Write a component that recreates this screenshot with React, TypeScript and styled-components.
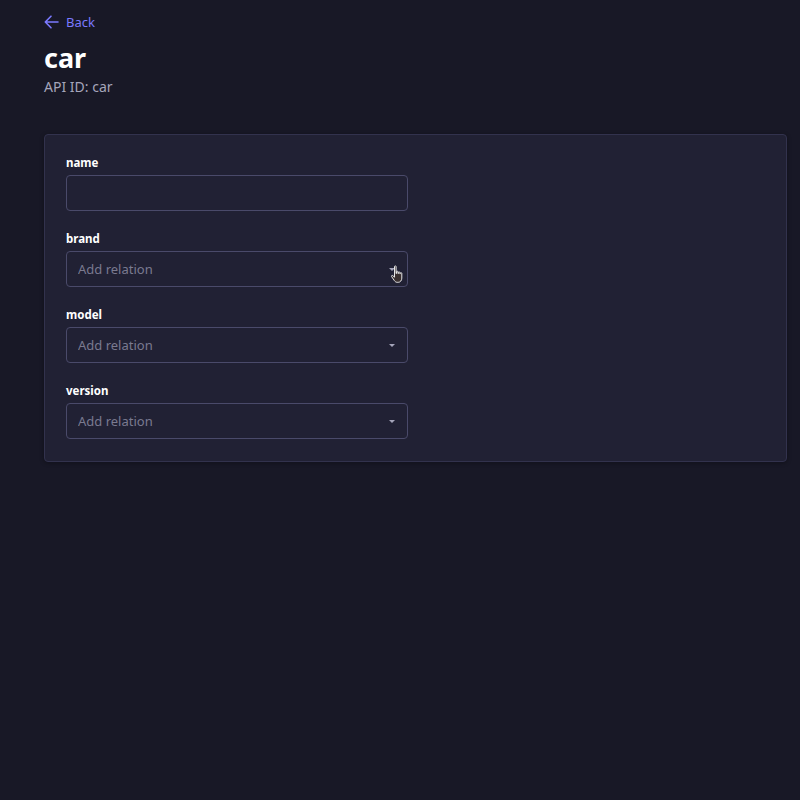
import React from "react";
import styled, { createGlobalStyle } from "styled-components";

const Global = createGlobalStyle`
  html, body { margin: 0; padding: 0; background: #181826; }
  body { font-family: "Noto Sans", "Open Sans", sans-serif; color: #ffffff; }
  * { box-sizing: border-box; }
`;

const Page = styled.div`
  min-height: 800px;
  padding: 12px 13px 40px 44px;
  background: #181826;
`;

const Header = styled.header`
  display: flex;
  flex-direction: column;
  margin-bottom: 37px;
`;

const BackLink = styled.a`
  display: inline-flex;
  align-items: center;
  gap: 7px;
  color: #7b79ff;
  font-size: 13px;
  line-height: 20px;
  text-decoration: none;
  height: 20px;
`;

const Title = styled.h1`
  margin: 9px 0 0;
  font-size: 27px;
  line-height: 34px;
  font-weight: 700;
  color: #ffffff;
`;

const Subtitle = styled.p`
  margin: 2px 0 0;
  font-size: 14px;
  line-height: 20px;
  color: #a5a5ba;
`;

const Card = styled.section`
  background: #212134;
  border: 1px solid #32324d;
  border-radius: 4px;
  padding: 20px 21px 22px;
  display: flex;
  flex-direction: column;
  gap: 20px;
  box-shadow: 0 1px 4px rgba(3, 3, 5, 0.35);
`;

const Field = styled.div`
  display: flex;
  flex-direction: column;
  gap: 4px;
  width: 342px;
`;

const Label = styled.label`
  font-size: 11.5px;
  line-height: 16px;
  font-weight: 700;
  color: #ffffff;
`;

const InputBox = styled.div`
  position: relative;
  height: 36px;
  border: 1px solid #4a4a6a;
  border-radius: 4px;
  background: #212134;
  display: flex;
  align-items: center;
  justify-content: space-between;
  padding: 0 12px 0 11px;
`;

const Placeholder = styled.span`
  font-size: 13px;
  color: #8a8aa0;
  opacity: 0.85;
`;

const Caret = styled.span`
  width: 0;
  height: 0;
  border-left: 3.5px solid transparent;
  border-right: 3.5px solid transparent;
  border-top: 3.5px solid #a5a5ba;
`;

const Cursor = styled.svg`
  position: absolute;
  right: 1px;
  top: 13px;
`;

const ArrowLeft = () => (
  <svg width="15" height="14" viewBox="0 0 15 14" fill="none">
    <path d="M14 7H1.5M7 1.2L1.3 7L7 12.8" stroke="#7b79ff" strokeWidth="1.6" strokeLinecap="round" strokeLinejoin="round" />
  </svg>
);

const HandCursor = () => (
  <Cursor width="16" height="19" viewBox="0 0 16 19">
    <path
      d="M4.5 1.5c0-.8 1.6-.8 1.6 0V8.5h.4V6.8c0-.8 1.5-.8 1.5 0v1.7h.4V7.5c0-.8 1.5-.8 1.5 0v1.2h.4V8.3c0-.8 1.5-.8 1.5 0v4.8c0 2.2-1.4 4.2-3.5 4.2H7.2c-1.4 0-2.2-.8-2.9-1.8L1.6 11.6c-.5-.8.5-1.6 1.2-1l1.7 1.6V1.5z"
      fill="#3a3030"
      stroke="#e8e8e8"
      strokeWidth="1"
    />
  </Cursor>
);

type FieldProps = { label: string; relation?: boolean; hover?: boolean };

const FormField = ({ label, relation, hover }: FieldProps) => (
  <Field>
    <Label>{label}</Label>
    <InputBox>
      {relation && <Placeholder>Add relation</Placeholder>}
      {relation && <Caret />}
      {hover && <HandCursor />}
    </InputBox>
  </Field>
);

export default function App() {
  return (
    <>
      <Global />
      <Page>
        <Header>
          <BackLink href="#">
            <ArrowLeft />
            Back
          </BackLink>
          <Title>car</Title>
          <Subtitle>API ID: car</Subtitle>
        </Header>
        <Card>
          <FormField label="name" />
          <FormField label="brand" relation hover />
          <FormField label="model" relation />
          <FormField label="version" relation />
        </Card>
      </Page>
    </>
  );
}
